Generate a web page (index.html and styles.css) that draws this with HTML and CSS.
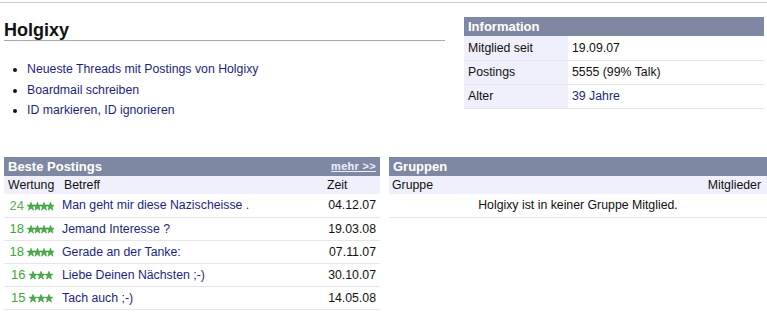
FILE: index.html
```html
<!DOCTYPE html>
<html>
<head>
	<title>Holgixy</title>
	<meta http-equiv="Content-Type" content="text/html; charset=utf-8" />
	<link rel="stylesheet" href="styles.css">
</head>
<body>
	<div class="topline"></div>
	<div class="top">
		<div class="profile">
			<h1>Holgixy</h1>
			<ul class="links">
				<li><a href="#">Neueste Threads mit Postings von Holgixy</a></li>
				<li><a href="#">Boardmail schreiben</a></li>
				<li><a href="#">ID markieren</a>, <a href="#">ID ignorieren</a></li>
			</ul>
		</div>
		<table class="box info">
			<tr><th colspan="2" class="head">Information</th></tr>
			<tr><td class="key">Mitglied seit</td><td>19.09.07</td></tr>
			<tr><td class="key">Postings</td><td>5555 (99% Talk)</td></tr>
			<tr><td class="key">Alter</td><td><a href="#">39 Jahre</a></td></tr>
		</table>
	</div>
	<div class="bottom">
		<table class="box best">
			<colgroup><col class="c-rate"><col><col class="c-time"></colgroup>
			<tr><th colspan="3" class="head"><div class="head-row"><span>Beste Postings</span><a href="#" class="more">mehr &gt;&gt;</a></div></th></tr>
			<tr class="sub"><td class="rate">Wertung</td><td class="subj">Betreff</td><td class="time">Zeit</td></tr>
			<tr><td class="rate"><span class="score light">24</span> <svg class="stars" width="27" height="9" viewBox="0 0 27 9"><use href="#star" x="0"/><use href="#star" x="6.5"/><use href="#star" x="13"/><use href="#star" x="19.5"/></svg></td><td class="subj"><a href="#">Man geht mir diese Nazischeisse .</a></td><td class="date">04.12.07</td></tr>
			<tr><td class="rate"><span class="score">18</span> <svg class="stars" width="27" height="9" viewBox="0 0 27 9"><use href="#star" x="0"/><use href="#star" x="6.5"/><use href="#star" x="13"/><use href="#star" x="19.5"/></svg></td><td class="subj"><a href="#">Jemand Interesse ?</a></td><td class="date">19.03.08</td></tr>
			<tr><td class="rate"><span class="score">18</span> <svg class="stars" width="27" height="9" viewBox="0 0 27 9"><use href="#star" x="0"/><use href="#star" x="6.5"/><use href="#star" x="13"/><use href="#star" x="19.5"/></svg></td><td class="subj"><a href="#">Gerade an der Tanke:</a></td><td class="date">07.11.07</td></tr>
			<tr><td class="rate"><span class="score">16</span> <svg class="stars" width="24" height="9" viewBox="0 0 24 9"><use href="#star" x="0"/><use href="#star" x="8"/><use href="#star" x="16"/></svg></td><td class="subj"><a href="#">Liebe Deinen Nächsten ;-)</a></td><td class="date">30.10.07</td></tr>
			<tr><td class="rate"><span class="score">15</span> <svg class="stars" width="24" height="9" viewBox="0 0 24 9"><use href="#star" x="0"/><use href="#star" x="8"/><use href="#star" x="16"/></svg></td><td class="subj"><a href="#">Tach auch ;-)</a></td><td class="date">14.05.08</td></tr>
		</table>
		<table class="box groups">
			<tr><th colspan="2" class="head">Gruppen</th></tr>
			<tr class="sub"><td>Gruppe</td><td class="members">Mitglieder</td></tr>
			<tr><td colspan="2" class="none">Holgixy ist in keiner Gruppe Mitglied.</td></tr>
		</table>
	</div>
	<svg width="0" height="0" class="defs">
		<defs>
			<path id="star" d="M4 0.3 L5 3.1 L7.9 3.2 L5.6 5 L6.5 8.2 L4 6.3 L1.5 8.2 L2.4 5 L0.1 3.2 L3 3.1 Z" fill="#45b045" stroke="#2f8a2f" stroke-width="0.5"/>
		</defs>
	</svg>
</body>
</html>
```
FILE: styles.css
```css
*{
	margin: 0;
	padding: 0;
	box-sizing: border-box;
}
body{
	font-family: "Liberation Sans", Arial, sans-serif;
	font-size: 12px;
	color: #111;
	background: #fff;
	width: 767px;
	overflow: hidden;
}
a{
	color: #231f80;
	text-decoration: none;
}
.topline{
	margin-top: 2px;
	border-top: 1px solid #c8c8c8;
}
.top{
	display: flex;
	align-items: flex-start;
	padding: 14px 0 0 4px;
	height: 154px;
}
.profile{
	width: 441px;
	margin-right: 19px;
}
.profile > h1{
	font-size: 18px;
	line-height: 22px;
	height: 24px;
	padding-top: 2px;
	border-bottom: 1px solid #a8a8a8;
}
.links{
	margin-top: 18px;
	padding-left: 23px;
}
.links > li{
	line-height: 20.5px;
	font-size: 12.3px;
}
.box{
	border-collapse: collapse;
	font-size: 12.3px;
}
.box td{
	border-bottom: 1px solid #e6e6ea;
	vertical-align: middle;
}
.head{
	background: #7f88a2;
	color: #fff;
	font-size: 13px;
	font-weight: bold;
	text-align: left;
	height: 19px;
	padding: 0 4px;
	line-height: 19px;
}
.head-row{
	display: flex;
	justify-content: space-between;
	align-items: center;
}
.info{
	width: 300px;
}
.info td{
	height: 24px;
	padding: 0 4px;
}
.info .key{
	background: #eff0fb;
	width: 104px;
}
.bottom{
	display: flex;
	align-items: flex-start;
	gap: 9px;
	padding-left: 4px;
}
.best{
	width: 376px;
	table-layout: fixed;
}
.c-rate{
	width: 58px;
}
.c-time{
	width: 55px;
}
.more{
	color: #eef0ff;
	font-size: 11px;
	text-decoration: underline;
	letter-spacing: 0.3px;
}
.sub td{
	background: #eff0fb;
	border-bottom: none;
}
.best td{
	height: 23px;
}
.best .sub td{
	height: 18px;
}
.rate{
	text-align: center;
	white-space: nowrap;
	padding-right: 2px;
}
.sub .rate{
	text-align: left;
	padding-left: 4px;
}
.subj{
	padding-left: 0;
	white-space: nowrap;
}
.sub .subj{
	padding-left: 2px;
}
.time{
	text-align: left;
	padding-left: 2px;
}
.date{
	text-align: right;
	padding-right: 4px;
}
.score{
	color: #3aa83a;
	font-size: 13px;
}
.score.light{
	color: #66a866;
}
.stars{
	vertical-align: -1px;
}
.groups{
	flex: 1;
}
.groups td{
	padding: 0 3px;
}
.groups .sub td{
	height: 18px;
}
.groups .members{
	text-align: right;
	padding-right: 6px;
}
.groups .none{
	text-align: center;
	height: 23px;
}
.defs{
	position: absolute;
}
```
